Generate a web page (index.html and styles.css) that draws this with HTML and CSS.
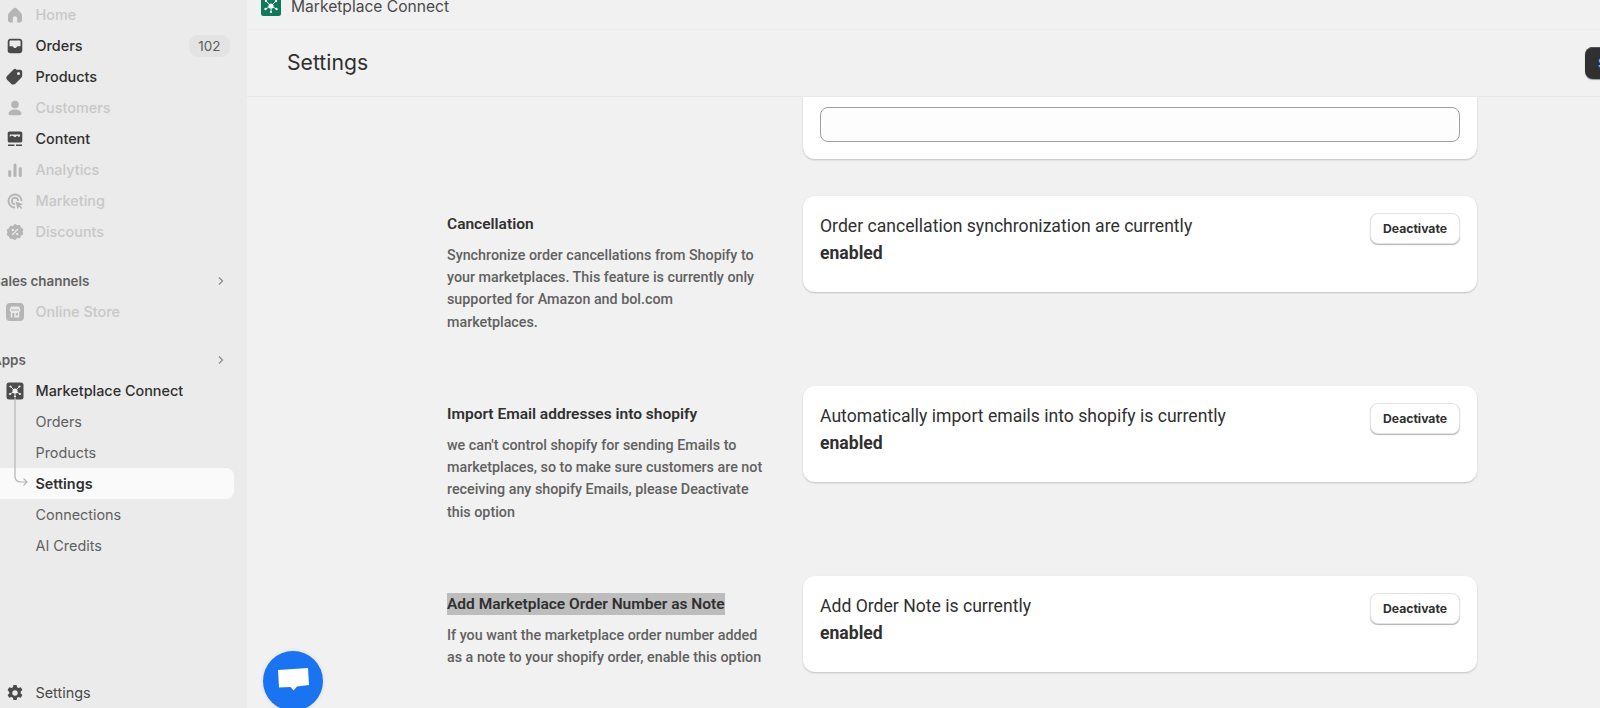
FILE: index.html
```html
<!DOCTYPE html>
<html lang="en">
<head>
<meta charset="utf-8">
<title>Marketplace Connect Settings</title>
<link rel="stylesheet" href="styles.css">
</head>
<body>
<div class="app">
  <nav class="sidebar">
    <a class="nav-row muted"><svg class="ico" viewBox="0 0 20 20"><path d="M10 2.800c-.8 0-1.400.4-2 1L4.500 7.400C3.600 8.300 3 9.300 3 10.500V15c0 1.400 1 2.400 2.400 2.400H7.800V13.500a2.200 2.200 0 0 1 4.400 0V17.400h2.400c1.400 0 2.400-1 2.400-2.400v-4.500c0-1.200-.6-2.200-1.500-3.100L12 3.800c-.6-.6-1.200-1-2-1z"/></svg><span>Home</span></a>
    <a class="nav-row strong"><svg class="ico" viewBox="0 0 20 20"><path fill-rule="evenodd" d="M5.500 2.700h9c1.600 0 2.800 1.200 2.800 2.800v9c0 1.600-1.200 2.800-2.800 2.800h-9a2.800 2.800 0 0 1-2.800-2.800v-9c0-1.600 1.200-2.800 2.800-2.800zM4.500 5.500v4.700h2.700c.7 0 1 .4 1.200.9.200.6.800 1 1.600 1s1.400-.4 1.600-1c.2-.5.500-.9 1.200-.9h2.700V5.500c0-.6-.4-1-1-1h-9c-.6 0-1 .4-1 1z"/></svg><span>Orders</span><em class="badge">102</em></a>
    <a class="nav-row strong"><svg class="ico" viewBox="0 0 20 20"><path fill-rule="evenodd" d="M11.400 2.800h3.800c1.100 0 2 .9 2 2v3.800c0 .8-.3 1.500-.9 2.100l-6 6c-1.200 1.200-3 1.200-4.200 0l-3.800-3.800a3 3 0 0 1 0-4.200l6-6c.6-.6 1.300-.9 2.100-.9zM13.500 8a1.500 1.500 0 1 0 0-3 1.500 1.500 0 0 0 0 3z"/></svg><span>Products</span></a>
    <a class="nav-row muted"><svg class="ico" viewBox="0 0 20 20"><path d="M10 2.700a3.800 3.800 0 1 1 0 7.600 3.800 3.800 0 0 1 0-7.600zM10 11.500c3.500 0 6.500 1.700 6.500 4.100 0 1-.8 1.700-1.800 1.700H5.300c-1 0-1.800-.7-1.800-1.700 0-2.400 3-4.100 6.500-4.100z"/></svg><span>Customers</span></a>
    <a class="nav-row strong"><svg class="ico" viewBox="0 0 20 20"><path fill-rule="evenodd" d="M4.500 2.500h11c1 0 1.800.8 1.800 1.800v7.400c0 1-.8 1.800-1.800 1.800h-11c-1 0-1.800-.8-1.800-1.800V4.300c0-1 .8-1.800 1.800-1.800zM4.800 8.300c.9-1.600 2.900-1.900 4-.7 1 1 1.800.8 2.400 0 .4-1 1.600-1 2-.1.300.6.800.6 1.300.2.400-.4.700-1.300.7-2.200H4.800z"/><path d="M3 15.500h6.500v1.600H3zM11 15.500h6v1.600h-6z"/></svg><span>Content</span></a>
    <a class="nav-row muted"><svg class="ico" viewBox="0 0 20 20"><rect x="3.200" y="10" width="3" height="7" rx="1.500"/><rect x="8.500" y="3.500" width="3" height="13.500" rx="1.500"/><rect x="13.800" y="7" width="3" height="10" rx="1.500"/></svg><span>Analytics</span></a>
    <a class="nav-row muted"><svg class="ico" viewBox="0 0 20 20"><path d="M10 2.500a7.500 7.500 0 0 1 7.500 7.500h-1.900A5.600 5.600 0 1 0 10 15.600v1.900a7.500 7.500 0 0 1 0-15z"/><path d="M10 6a4 4 0 0 1 4 4h-1.800A2.200 2.200 0 1 0 10 12.200V14a4 4 0 0 1 0-8z"/><path d="M10.500 10.500l7.500 2.600-3 1.400 2.300 2.500-1 1-2.400-2.400-1.300 2.900z"/></svg><span>Marketing</span></a>
    <a class="nav-row muted"><svg class="ico" viewBox="0 0 20 20"><path fill-rule="evenodd" d="M10 1.800l2.300 1.500 2.700-.2 1 2.500 2.300 1.500-.7 2.600.7 2.600-2.300 1.500-1 2.500-2.700-.2L10 18.200l-2.300-1.500-2.700.2-1-2.500-2.300-1.500.7-2.600-.7-2.600L4 6.200l1-2.500 2.700.2zM7.800 6.700a1.200 1.200 0 1 0 0 2.400 1.200 1.200 0 0 0 0-2.400zM12.200 10.900a1.200 1.200 0 1 0 0 2.400 1.200 1.200 0 0 0 0-2.400zM12.500 6.500l-5.800 6 .9.900 5.800-6z"/></svg><span>Discounts</span></a>

    <div class="section first"><span>Sales channels</span><svg class="chev" viewBox="0 0 10 10"><path d="M3 1.500 6.500 5 3 8.500"/></svg></div>
    <a class="nav-row muted"><svg class="ico" viewBox="0 0 20 20"><path fill-rule="evenodd" d="M4.800 1h10.400C17.300 1 19 2.700 19 4.800v10.400c0 2.100-1.700 3.800-3.800 3.800H4.800A3.800 3.800 0 0 1 1 15.200V4.800C1 2.700 2.700 1 4.800 1zM6 4.500 4.500 8c0 1 .6 1.500 1.300 1.700v5.800h8.400V9.700c.7-.2 1.300-.7 1.300-1.700L14 4.500zM5.900 7.500h8.200v1H5.900zM7.300 11h2v4.500h-2zM10.800 11h2v2.500h-2z"/></svg><span>Online Store</span></a>

    <div class="section"><span>Apps</span><svg class="chev" viewBox="0 0 10 10"><path d="M3 1.500 6.500 5 3 8.500"/></svg></div>
    <a class="nav-row strong app-row"><svg class="ico" viewBox="0 0 20 20"><rect x="1.500" y="1.500" width="17" height="17" rx="2.500" fill="#4d4d4d"/><g stroke="#f2f2f2" stroke-width=".9"><path d="M10 10 5.500 5.500M10 10l4.500-4.500M10 10l-5 3M10 10l5 3M10 10v5.500"/></g><circle cx="10" cy="10" r="2.600" fill="#f2f2f2"/><circle cx="5.500" cy="5.500" r="1.100" fill="#f2f2f2"/><circle cx="14.500" cy="5.500" r="1.100" fill="#f2f2f2"/><circle cx="5" cy="13" r="1.100" fill="#f2f2f2"/><circle cx="15" cy="13" r="1.100" fill="#f2f2f2"/><circle cx="10" cy="15.500" r="1" fill="#f2f2f2"/></svg><span>Marketplace Connect</span></a>
    <div class="subnav">
      <svg class="tree" viewBox="0 0 30 90"><path d="M15 0V78c0 4 2 6 6 6H27M23.500 80.500 27 84l-3.500 3.500"/></svg>
      <a class="sub-row">Orders</a>
      <a class="sub-row">Products</a>
      <a class="sub-row current">Settings</a>
      <a class="sub-row">Connections</a>
      <a class="sub-row">AI Credits</a>
    </div>
    <a class="nav-row foot"><svg class="ico" viewBox="0 0 20 20"><path fill-rule="evenodd" d="M8.400 1.900h3.200l.5 2.300 1.500.8 2.200-.8 1.600 2.800-1.700 1.600v1.800l1.700 1.600-1.600 2.800-2.200-.8-1.500.8-.5 2.300H8.400l-.5-2.300-1.500-.8-2.200.8-1.600-2.800 1.700-1.600V9.200L2.600 7l1.600-2.800 2.200.8 1.500-.8zM10 7.300a2.700 2.700 0 1 0 0 5.400 2.700 2.700 0 0 0 0-5.400z"/></svg><span>Settings</span></a>
  </nav>

  <main class="main">
    <header class="topbar">
      <svg class="app-logo" viewBox="0 0 20 20"><rect width="20" height="20" rx="2.500" fill="#0e7a5a"/><g stroke="#fff" stroke-width=".9"><path d="M10 10 5 5M10 10l5-5M10 10l-5.500 3M10 10l5.500 3M10 10v6"/></g><circle cx="10" cy="10" r="2.600" fill="#fff"/><circle cx="5" cy="5" r="1.200" fill="#fff"/><circle cx="15" cy="5" r="1.200" fill="#fff"/><circle cx="4.500" cy="13" r="1.200" fill="#fff"/><circle cx="15.500" cy="13" r="1.200" fill="#fff"/><circle cx="10" cy="16" r="1.100" fill="#fff"/></svg>
      <span>Marketplace Connect</span>
    </header>
    <div class="pagehead">
      <h1>Settings</h1>
      <button class="save">Save</button>
    </div>
    <div class="content">
      <section class="setting stub">
        <div class="info"></div>
        <div class="card stub-card"><div class="field"></div></div>
      </section>
      <section class="setting s1">
        <div class="info">
          <h2>Cancellation</h2>
          <p>Synchronize order cancellations from Shopify to your marketplaces. This feature is currently only supported for Amazon and bol.com marketplaces.</p>
        </div>
        <div class="card">
          <div class="status">Order cancellation synchronization are currently<br><b>enabled</b></div>
          <button class="btn">Deactivate</button>
        </div>
      </section>
      <section class="setting">
        <div class="info">
          <h2>Import Email addresses into shopify</h2>
          <p>we can't control shopify for sending Emails to marketplaces, so to make sure customers are not receiving any shopify Emails, please Deactivate this option</p>
        </div>
        <div class="card">
          <div class="status">Automatically import emails into shopify is currently<br><b>enabled</b></div>
          <button class="btn">Deactivate</button>
        </div>
      </section>
      <section class="setting">
        <div class="info">
          <h2><mark>Add Marketplace Order Number as Note</mark></h2>
          <p>If you want the marketplace order number added as a note to your shopify order, enable this option</p>
        </div>
        <div class="card">
          <div class="status">Add Order Note is currently<br><b>enabled</b></div>
          <button class="btn">Deactivate</button>
        </div>
      </section>
    </div>
  </main>
</div>
<div class="chat"><svg viewBox="0 0 32 28"><path d="M1 3 31 1l1 17-12 1.500-3.500 4-3-3.500L2 20.500z" fill="#fff"/></svg></div>
</body>
</html>
```
FILE: styles.css
```css
* { box-sizing: border-box; }
html, body { margin: 0; height: 100%; overflow: hidden; }
body { font-family: Inter, "Liberation Sans", sans-serif; background: #f1f1f1; color: #303030; }
.app { display: flex; height: 708px; overflow: hidden; }

/* Sidebar */
.sidebar { width: 247px; flex: none; background: #ebebeb; display: flex; flex-direction: column; overflow: hidden; }
.sidebar > .nav-row:first-child { margin-top: -1px; }
.nav-row { display: flex; align-items: center; height: 31px; padding: 0 17px 0 5px; font-size: 14.400px; font-weight: 500; flex: none; }
.nav-row span { flex: 1; margin-left: 10.500px; }
.ico { width: 20px; height: 20px; flex: none; fill: #4a4a4a; }
.nav-row.strong { color: #303030; }
.nav-row.muted { color: #c7c7c7; }
.nav-row.muted .ico { fill: #b5b5b5; }
.badge { font-style: normal; font-size: 13.500px; font-weight: 400; color: #5c5c5c; background: #e3e3e3; border-radius: 9px; padding: 0 9.500px; height: 22px; line-height: 22px; }
.section { display: flex; align-items: center; justify-content: space-between; height: 30px; margin-top: 18px; margin-left: -8px; padding-right: 21px; font-size: 13.400px; font-weight: 600; color: #616161; flex: none; }
.section.first { margin-top: 19px; }
.chev { width: 10px; height: 10px; fill: none; stroke: #8a8a8a; stroke-width: 1.200; }
.subnav { position: relative; display: flex; flex-direction: column; flex: none; }
.tree { position: absolute; left: 0; top: -8px; width: 30px; height: 90px; fill: none; stroke: #b5b5b5; stroke-width: 1.200; z-index: 1; }
.sub-row { display: flex; align-items: center; height: 31px; padding-left: 35.500px; font-size: 14.400px; color: #616161; }
.sub-row.current { width: 234px; background: #fafafa; border-radius: 0 8px 8px 0; color: #303030; font-weight: 600; }
.foot { margin-top: auto; color: #4a4a4a; font-weight: 400; }

/* Main */
.main { flex: 1; min-width: 0; display: flex; flex-direction: column; overflow: hidden; }
.topbar { height: 30px; flex: none; display: flex; align-items: flex-end; gap: 10px; padding: 0 0 13px 14px; border-bottom: 1px solid #ebebeb; font-size: 15.600px; color: #4a4a4a; }
.topbar span { line-height: 20px; margin-bottom: -1px; }
.app-logo { width: 20px; height: 20px; flex: none; }
.pagehead { height: 67px; flex: none; display: flex; align-items: center; justify-content: space-between; padding-left: 40px; border-bottom: 1px solid #e8e8e8; overflow: hidden; }
.pagehead h1 { margin: 0 0 2px; font-size: 21.200px; font-weight: 400; color: #303030; }
.save { margin-right: -47px; width: 62px; height: 32px; border: 0; border-radius: 8px; background: #303030; color: #7ab8ff; font: 600 13px Inter, sans-serif; text-align: left; padding-left: 13px; box-shadow: inset 0 1px 0 #555, 0 1px 1px #999; }

.content { flex: 1; min-height: 0; overflow: hidden; padding-left: 200px; padding-right: 123px; }
.setting { display: flex; gap: 38px; align-items: flex-start; min-height: 190px; }
.info { width: 318px; flex: none; }
.card { flex: 1; background: #fff; border-radius: 12px; padding: 17px 17px 0; display: flex; justify-content: space-between; align-items: flex-start; box-shadow: 0 1px 2px rgba(0, 0, 0, .2); height: 96px; }
.stub { min-height: 0; }
.stub-card { height: 62px; padding-top: 10px; border-radius: 0 0 12px 12px; }
.field { width: 100%; height: 35px; border: 1px solid #a0a0a0; border-radius: 8px; background: #fdfdfd; }
.s1 { margin-top: 37px; }
.info h2 { margin: 17px 0 0; font: 600 15.500px/22px Roboto, sans-serif; color: #303030; }
.info p { margin: 9px 0 0; font: 500 14.300px/22.200px Roboto, sans-serif; color: #616161; }
mark { display: inline-block; line-height: 22px; background: #bdbdbd; color: #303030; }
.status { font: 400 17.600px/27px Roboto, sans-serif; color: #303030; }
.status b { font-weight: 700; }
.btn { width: 90px; height: 31px; border: 1px solid #e3e3e3; border-radius: 8px; background: #fff; box-shadow: 0 1px 1px rgba(0, 0, 0, .3); font: 700 12.200px Inter, sans-serif; color: #303030; padding: 0; }

.chat { position: absolute; left: 263px; top: 651px; width: 60px; height: 60px; border-radius: 50%; background: #1a73f0; display: flex; align-items: center; justify-content: center; box-shadow: 0 0 4px rgba(0, 0, 0, .1); }
.chat svg { width: 32px; height: 28px; }
```
